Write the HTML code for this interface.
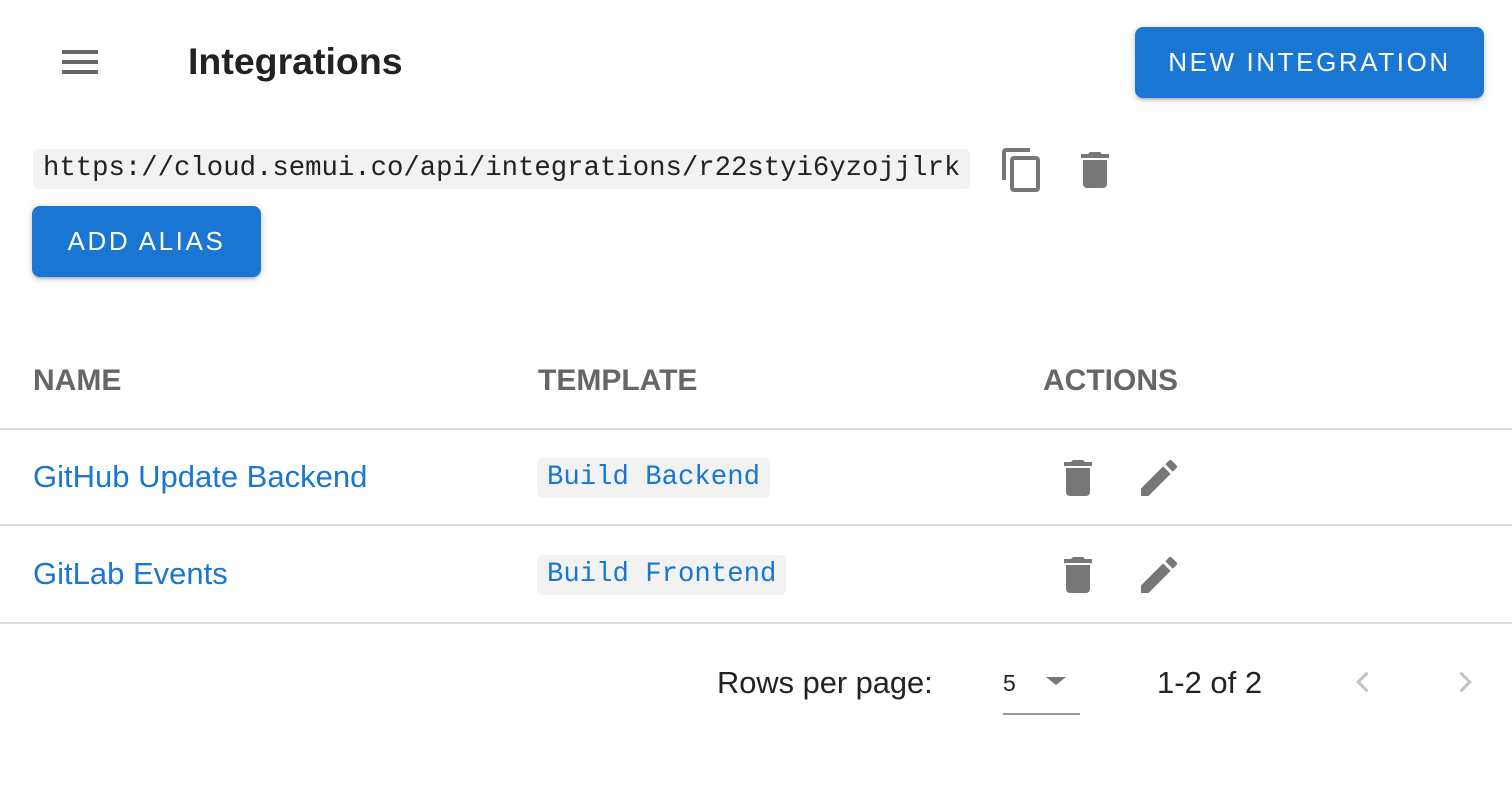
<!DOCTYPE html>
<html><head><style>
body{margin:0;width:1512px;height:790px;background:#fff;font-family:"Liberation Sans",sans-serif;position:relative;overflow:hidden}
.a{position:absolute;white-space:nowrap}
.btn{position:absolute;background:#1976d2;color:#fff;border-radius:8px;box-shadow:0 3px 2px -2px rgba(0,0,0,.2),0 2px 4px rgba(0,0,0,.14),0 1px 10px rgba(0,0,0,.12);font-size:26px;letter-spacing:2.6px;display:flex;align-items:center;justify-content:center;font-weight:500}
.mono{font-family:"Liberation Mono",monospace}
.code{position:absolute;background:#f2f2f2;border-radius:6px;font-family:"Liberation Mono",monospace;font-size:27.3px;color:#1976d2;height:40px;line-height:40px;padding:0 10px}
.hr{position:absolute;left:0;width:1512px;height:2px;background:#ddd}
.th{position:absolute;font-size:30px;font-weight:bold;color:#666;top:364px}
.link{position:absolute;font-size:31px;color:#1976d2}
svg{position:absolute}
</style></head><body>
<svg style="left:56px;top:38px" width="48" height="48" viewBox="0 0 24 24"><path d="M3 18h18v-2H3v2zm0-5h18v-2H3v2zm0-7v2h18V6H3z" fill="#666"/></svg>
<div class="a" style="left:188px;top:40px;font-size:37.5px;font-weight:bold;color:#222">Integrations</div>
<div class="btn" style="left:1135px;top:27px;width:349px;height:71px">NEW INTEGRATION</div>
<div class="a mono" style="left:33px;top:149px;height:40px;line-height:40px;background:#f2f2f2;border-radius:6px;padding:0 10px;font-size:27.3px;color:#222">https://cloud.semui.co/api/integrations/r22styi6yzojjlrk</div>
<svg style="left:998px;top:146px" width="48" height="48" viewBox="0 0 24 24"><path d="M16 1H4c-1.1 0-2 .9-2 2v14h2V3h12V1zm3 4H8c-1.1 0-2 .9-2 2v14c0 1.1.9 2 2 2h11c1.1 0 2-.9 2-2V7c0-1.1-.9-2-2-2zm0 16H8V7h11v14z" fill="#777"/></svg>
<svg style="left:1071px;top:146px" width="48" height="48" viewBox="0 0 24 24"><path d="M6 19c0 1.1.9 2 2 2h8c1.1 0 2-.9 2-2V7H6v12zM19 4h-3.5l-1-1h-5l-1 1H5v2h14V4z" fill="#777"/></svg>
<div class="btn" style="left:32px;top:206px;width:229px;height:71px">ADD ALIAS</div>
<div class="th" style="left:33px">NAME</div>
<div class="th" style="left:538px">TEMPLATE</div>
<div class="th" style="left:1043px">ACTIONS</div>
<div class="hr" style="top:428px"></div>
<div class="link" style="left:33px;top:459px">GitHub Update Backend</div>
<div class="code" style="left:537px;top:458px">Build Backend</div>
<svg style="left:1054px;top:454px" width="48" height="48" viewBox="0 0 24 24"><path d="M6 19c0 1.1.9 2 2 2h8c1.1 0 2-.9 2-2V7H6v12zM19 4h-3.5l-1-1h-5l-1 1H5v2h14V4z" fill="#777"/></svg>
<svg style="left:1135px;top:454px" width="48" height="48" viewBox="0 0 24 24"><path d="M3 17.25V21h3.75L17.81 9.94l-3.75-3.75L3 17.25zM20.71 7.04a1 1 0 000-1.41l-2.34-2.34a1 1 0 00-1.41 0l-1.83 1.83 3.75 3.75 1.83-1.83z" fill="#777"/></svg>
<div class="hr" style="top:524px"></div>
<div class="link" style="left:33px;top:556px">GitLab Events</div>
<div class="code" style="left:537px;top:555px">Build Frontend</div>
<svg style="left:1054px;top:551px" width="48" height="48" viewBox="0 0 24 24"><path d="M6 19c0 1.1.9 2 2 2h8c1.1 0 2-.9 2-2V7H6v12zM19 4h-3.5l-1-1h-5l-1 1H5v2h14V4z" fill="#777"/></svg>
<svg style="left:1135px;top:551px" width="48" height="48" viewBox="0 0 24 24"><path d="M3 17.25V21h3.75L17.81 9.94l-3.75-3.75L3 17.25zM20.71 7.04a1 1 0 000-1.41l-2.34-2.34a1 1 0 00-1.41 0l-1.83 1.83 3.75 3.75 1.83-1.83z" fill="#777"/></svg>
<div class="hr" style="top:622px"></div>
<div class="a" style="left:717px;top:665px;font-size:30.8px;color:#222">Rows per page:</div>
<div class="a" style="left:1003px;top:670px;font-size:23px;color:#222">5</div>
<svg style="left:1044px;top:670px" width="24" height="24" viewBox="0 0 24 24"><path d="M2 7h20l-10 8z" fill="#777"/></svg>
<div class="a" style="left:1003px;top:713px;width:77px;height:2px;background:#999"></div>
<div class="a" style="left:1157px;top:665px;font-size:31px;color:#222">1-2 of 2</div>
<svg style="left:1350px;top:668px" width="28" height="28" viewBox="0 0 24 24"><path d="M15 4l-8 8 8 8" fill="none" stroke="#c4c4c4" stroke-width="2.6"/></svg>
<svg style="left:1450px;top:668px" width="28" height="28" viewBox="0 0 24 24"><path d="M9 4l8 8-8 8" fill="none" stroke="#c4c4c4" stroke-width="2.6"/></svg>
</body></html>
